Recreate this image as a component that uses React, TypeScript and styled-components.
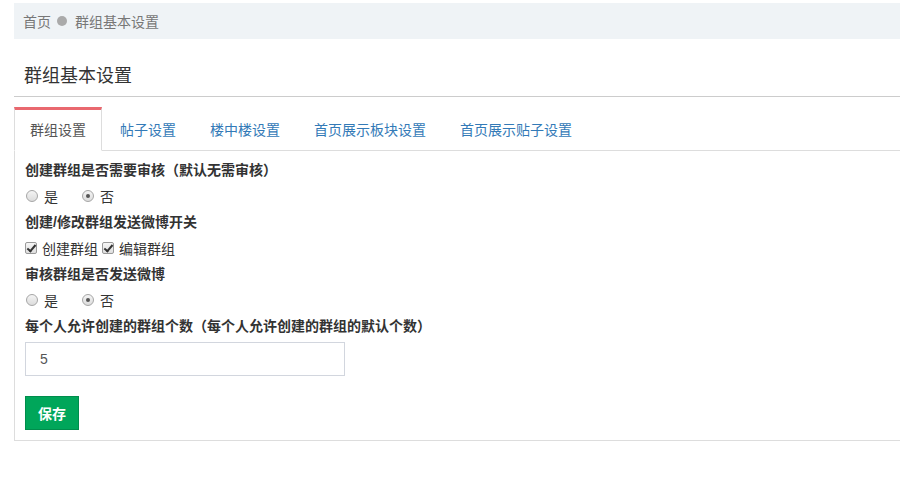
import React, { useState } from 'react';
import styled, { createGlobalStyle } from 'styled-components';

const GlobalStyle = createGlobalStyle`
  body {
    margin: 0;
    overflow: hidden;
    background: #fff;
    font-family: "Liberation Sans", "Noto Sans CJK SC", sans-serif;
    font-size: 14px;
    color: #333;
    text-spacing-trim: space-all;
    font-feature-settings: "chws" 0, "halt" 0, "palt" 0;
  }
`;

const Page = styled.div`
  padding: 3px 0 0 14px;
  margin-right: -20px;
`;

const Breadcrumb = styled.div`
  display: flex;
  align-items: center;
  height: 36px;
  padding-left: 9px;
  background-color: #eff3f6;
  color: #777;
  font-size: 14px;
`;

const Dot = styled.span`
  width: 10px;
  height: 10px;
  border-radius: 50%;
  background-color: #aaa;
  margin: 0 8px 0 6px;
`;

const Title = styled.h1`
  margin: 0;
  padding: 19px 0 2px 10px;
  line-height: 36px;
  font-size: 18px;
  font-weight: normal;
  color: #333;
  border-bottom: 1px solid #ccc;
`;

const TabList = styled.ul`
  display: flex;
  list-style: none;
  margin: 10px 0 0 0;
  padding: 0;
  border-bottom: 1px solid #ddd;
`;

const TabItem = styled.li<{ $active?: boolean }>`
  margin: 0 2px -1px 0;
  padding: 10px 15px;
  line-height: 20px;
  font-size: 14px;
  cursor: pointer;
  border: 1px solid transparent;
  border-top: 3px solid ${(p) => (p.$active ? '#e9686f' : 'transparent')};
  border-left-color: ${(p) => (p.$active ? '#ddd' : 'transparent')};
  border-right-color: ${(p) => (p.$active ? '#ddd' : 'transparent')};
  background: ${(p) => (p.$active ? '#fff' : 'transparent')};
  color: ${(p) => (p.$active ? '#555' : '#337ab7')};
`;

const Panel = styled.div`
  border: 1px solid #ddd;
  border-top: none;
  padding: 6px 10px 10px 10px;
`;

const FieldLabel = styled.div`
  font-weight: bold;
  line-height: 26px;
  color: #333;
`;

const OptionRow = styled.div`
  display: flex;
  align-items: center;
  height: 26px;
  gap: 4px;
`;

const Option = styled.label<{ $gap?: number }>`
  display: flex;
  align-items: center;
  margin-right: ${(p) => p.$gap ?? 0}px;
  color: #333;
`;

const Radio = styled.input.attrs({ type: 'radio' })`
  appearance: none;
  position: relative;
  width: 12px;
  height: 12px;
  margin: 0 6px 0 1px;
  border-radius: 50%;
  border: 1px solid #a6a6a6;
  background: linear-gradient(#f4f4f4, #dcdcdc);
  &:checked::after {
    content: '';
    position: absolute;
    left: 3px;
    top: 3px;
    width: 4px;
    height: 4px;
    border-radius: 50%;
    background: #555;
  }
`;

const Checkbox = styled.input.attrs({ type: 'checkbox' })`
  appearance: none;
  position: relative;
  width: 12px;
  height: 12px;
  margin: 0 5px 0 0;
  border: 1px solid #9a9a9a;
  border-radius: 2px;
  background: linear-gradient(#f6f6f6, #dedede);
  &:checked::after {
    content: '';
    position: absolute;
    left: 3px;
    top: 0px;
    width: 3px;
    height: 7px;
    border: solid #333;
    border-width: 0 2px 2px 0;
    transform: rotate(40deg);
  }
`;

const TextInput = styled.input`
  box-sizing: border-box;
  display: block;
  width: 320px;
  height: 34px;
  margin-top: 3px;
  padding: 6px 14px;
  border: 1px solid #d2d6de;
  font-family: inherit;
  font-size: 14px;
  color: #555;
  outline: none;
`;

const SaveButton = styled.button`
  box-sizing: border-box;
  display: block;
  height: 34px;
  margin-top: 20px;
  padding: 0 12px;
  border: 1px solid #008d4c;
  background-color: #00a65a;
  color: #fff;
  font-family: inherit;
  font-size: 14px;
  font-weight: bold;
  cursor: pointer;
`;

const tabs = ['群组设置', '帖子设置', '楼中楼设置', '首页展示板块设置', '首页展示贴子设置'];

export default function App() {
  const [active, setActive] = useState(0);
  const [audit, setAudit] = useState('no');
  const [weiboAudit, setWeiboAudit] = useState('no');
  const [count, setCount] = useState('5');

  return (
    <Page>
      <GlobalStyle />
      <Breadcrumb>
        首页
        <Dot />
        群组基本设置
      </Breadcrumb>
      <Title>群组基本设置</Title>
      <TabList>
        {tabs.map((t, i) => (
          <TabItem key={t} $active={i === active} onClick={() => setActive(i)}>
            {t}
          </TabItem>
        ))}
      </TabList>
      <Panel>
        <FieldLabel>创建群组是否需要审核（默认无需审核）</FieldLabel>
        <OptionRow>
          <Option $gap={19}>
            <Radio name="audit" checked={audit === 'yes'} onChange={() => setAudit('yes')} />是
          </Option>
          <Option>
            <Radio name="audit" checked={audit === 'no'} onChange={() => setAudit('no')} />否
          </Option>
        </OptionRow>
        <FieldLabel>创建/修改群组发送微博开关</FieldLabel>
        <OptionRow>
          <Option>
            <Checkbox defaultChecked />创建群组
          </Option>
          <Option>
            <Checkbox defaultChecked />编辑群组
          </Option>
        </OptionRow>
        <FieldLabel>审核群组是否发送微博</FieldLabel>
        <OptionRow>
          <Option $gap={19}>
            <Radio name="weibo" checked={weiboAudit === 'yes'} onChange={() => setWeiboAudit('yes')} />是
          </Option>
          <Option>
            <Radio name="weibo" checked={weiboAudit === 'no'} onChange={() => setWeiboAudit('no')} />否
          </Option>
        </OptionRow>
        <FieldLabel>每个人允许创建的群组个数（每个人允许创建的群组的默认个数）</FieldLabel>
        <TextInput value={count} onChange={(e) => setCount(e.target.value)} />
        <SaveButton>保存</SaveButton>
      </Panel>
    </Page>
  );
}
